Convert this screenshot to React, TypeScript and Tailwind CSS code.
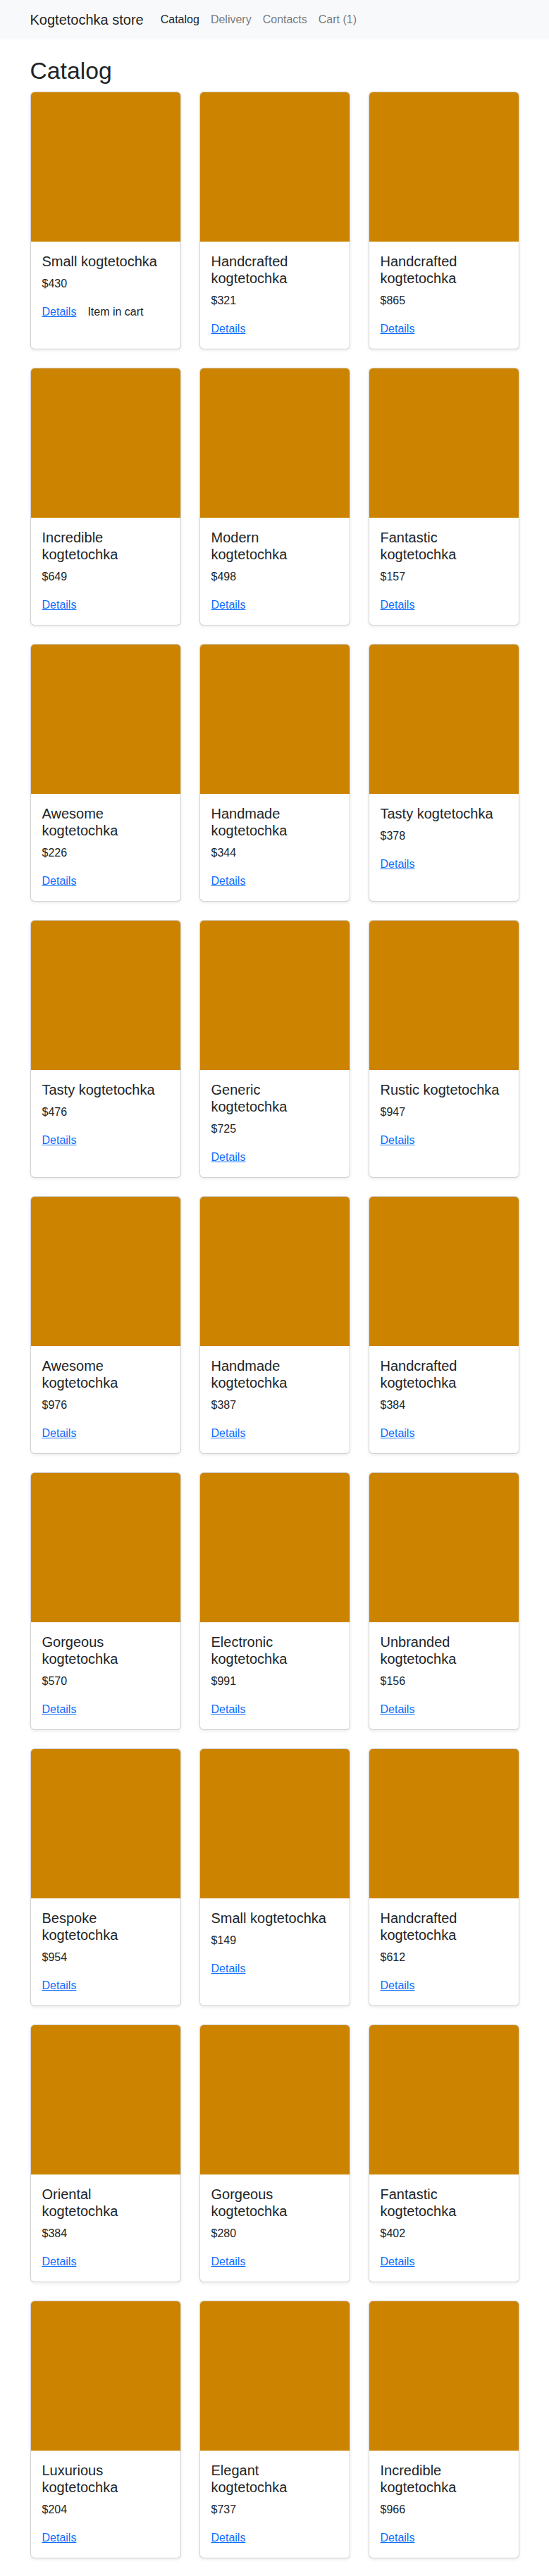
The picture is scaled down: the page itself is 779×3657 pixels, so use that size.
import React from 'react';

type Product = { name: string; price: number; inCart?: boolean };

const products: Product[] = [
    { name: 'Small kogtetochka', price: 430, inCart: true },
    { name: 'Handcrafted kogtetochka', price: 321 },
    { name: 'Handcrafted kogtetochka', price: 865 },
    { name: 'Incredible kogtetochka', price: 649 },
    { name: 'Modern kogtetochka', price: 498 },
    { name: 'Fantastic kogtetochka', price: 157 },
    { name: 'Awesome kogtetochka', price: 226 },
    { name: 'Handmade kogtetochka', price: 344 },
    { name: 'Tasty kogtetochka', price: 378 },
    { name: 'Tasty kogtetochka', price: 476 },
    { name: 'Generic kogtetochka', price: 725 },
    { name: 'Rustic kogtetochka', price: 947 },
    { name: 'Awesome kogtetochka', price: 976 },
    { name: 'Handmade kogtetochka', price: 387 },
    { name: 'Handcrafted kogtetochka', price: 384 },
    { name: 'Gorgeous kogtetochka', price: 570 },
    { name: 'Electronic kogtetochka', price: 991 },
    { name: 'Unbranded kogtetochka', price: 156 },
    { name: 'Bespoke kogtetochka', price: 954 },
    { name: 'Small kogtetochka', price: 149 },
    { name: 'Handcrafted kogtetochka', price: 612 },
    { name: 'Oriental kogtetochka', price: 384 },
    { name: 'Gorgeous kogtetochka', price: 280 },
    { name: 'Fantastic kogtetochka', price: 402 },
    { name: 'Luxurious kogtetochka', price: 204 },
    { name: 'Elegant kogtetochka', price: 737 },
    { name: 'Incredible kogtetochka', price: 966 },
];

const ProductCard = ({ product }: { product: Product }) => (
    <div className="flex flex-col border border-black/[0.175] rounded-md overflow-hidden bg-white shadow-[0_2px_4px_rgba(0,0,0,0.075)]">
        <div className="h-[212px] bg-[#cc8400]"></div>
        <div className="p-4">
            <h5 className="text-[20px] leading-[24px] font-medium mb-2 text-[#212529]">{product.name}</h5>
            <p className="text-base leading-6 mb-4 text-[#212529]">${product.price}</p>
            <div className="flex items-center leading-6">
                <a href="#" className="text-[#0d6efd] underline">Details</a>
                {product.inCart && <span className="ml-4 text-[#212529]">Item in cart</span>}
            </div>
        </div>
    </div>
);

const App = () => {
    return (
        <div className="min-h-screen bg-white text-[#212529] font-['Liberation_Sans',Arial,sans-serif]">
            {/* Navbar */}
            <nav className="bg-[#f8f9fa] h-14">
                <div className="w-[694px] mx-auto h-full flex items-center">
                    <a href="#" className="text-[20px] leading-[30px] text-black/90 mr-4">Kogtetochka store</a>
                    <ul className="flex items-center text-base leading-6">
                        <li><a href="#" className="px-2 text-black/90">Catalog</a></li>
                        <li><a href="#" className="px-2 text-black/55">Delivery</a></li>
                        <li><a href="#" className="px-2 text-black/55">Contacts</a></li>
                        <li><a href="#" className="px-2 text-black/55">Cart (1)</a></li>
                    </ul>
                </div>
            </nav>

            <main className="w-[694px] mx-auto pt-6 pb-[25px]">
                <h1 className="text-[33.7px] leading-[40px] font-medium mb-[10px]">Catalog</h1>
                <div className="grid grid-cols-3 gap-[26px]">
                    {products.map((p, i) => (
                        <ProductCard key={i} product={p} />
                    ))}
                </div>
            </main>
        </div>
    );
};

export default App;
